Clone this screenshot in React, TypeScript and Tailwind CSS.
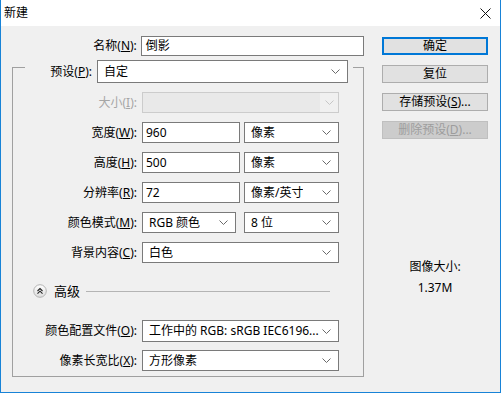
import React from 'react';

const Chevron: React.FC<{ disabled?: boolean }> = ({ disabled }) => (
  <svg width="9" height="5" viewBox="0 0 9 5" className="shrink-0">
    <polyline points="0.5,0.5 4.5,4.5 8.5,0.5" fill="none" stroke={disabled ? '#c6c6c6' : '#6a6a6a'} strokeWidth="1" />
  </svg>
);

const Label: React.FC<{ text: string; k: string; disabled?: boolean }> = ({ text, k, disabled }) => (
  <div className={`w-[124px] mr-[5px] text-right whitespace-nowrap ${disabled ? 'text-[#a6a6a6]' : 'text-black'}`}>
    {text}(<span className="underline">{k}</span>):
  </div>
);

const Select: React.FC<{ value: string; w: string; h?: string }> = ({ value, w, h = 'h-[21px]' }) => (
  <div className={`${w} ${h} flex items-center justify-between border border-[#7a7a7a] bg-white pl-[6px] pr-[7px]`}>
    <span className="whitespace-nowrap overflow-hidden">{value}</span>
    <Chevron />
  </div>
);

const Input: React.FC<{ value: string; w: string }> = ({ value, w }) => (
  <div className={`${w} h-[21px] flex items-center border border-[#7a7a7a] bg-white pl-[3px]`}>{value}</div>
);

const Row: React.FC<{ children: React.ReactNode; className?: string }> = ({ children, className = '' }) => (
  <div className={`flex items-center ${className}`}>{children}</div>
);

const Button: React.FC<{ children: React.ReactNode; focused?: boolean; disabled?: boolean }> = ({ children, focused, disabled }) => (
  <div
    className={`h-[18px] flex items-center justify-center whitespace-nowrap ${
      focused
        ? 'border-2 border-[#0078d7] bg-[#e1e1e1]'
        : disabled
        ? 'border border-[#bfbfbf] bg-[#cccccc] text-[#9d9d9d]'
        : 'border border-[#adadad] bg-[#e1e1e1]'
    }`}
  >
    {children}
  </div>
);

export default function App() {
  return (
    <div className="w-[501px] h-[393px] flex flex-col bg-white border-x border-b border-[#1883d7] text-[12px] leading-[16px] text-black font-['Noto_Sans','Noto_Sans_CJK_SC',sans-serif]">
      {/* title bar */}
      <div className="h-[26px] shrink-0 flex items-center justify-between pl-[3px] pr-[9px] bg-white">
        <span>新建</span>
        <svg width="11" height="11" viewBox="0 0 11 11">
          <path d="M0.5 0.5 L10.5 10.5 M10.5 0.5 L0.5 10.5" stroke="#111" strokeWidth="1" />
        </svg>
      </div>

      {/* body */}
      <div className="flex-1 flex bg-[#f0f0f0]">
        {/* left */}
        <div className="w-[363px] flex flex-col">
          <Row className="mt-[10px]">
            <div className="w-[137px] mr-[4px] text-right">
              名称(<span className="underline">N</span>):
            </div>
            <div className="w-[225px] h-[20px] flex items-center border border-[#7a7a7a] bg-white pl-[4px]">倒影</div>
          </Row>

          {/* group box */}
          <div className="ml-[11px] mt-[11px] w-[352px] border border-[#a0a0a0] flex flex-col pb-[5px]">
            <div className="-mt-[8px] ml-[12px] w-[328px] flex items-center bg-[#f0f0f0]">
              <div className="w-[72px] pr-[5px] text-right whitespace-nowrap">
                预设(<span className="underline">P</span>):
              </div>
              <Select value="自定" w="w-[251px]" h="h-[23px]" />
            </div>

            <Row className="mt-[9px]">
              <Label text="大小" k="I" disabled />
              <div className="w-[197px] h-[21px] flex border border-[#cccccc] bg-[#f0f0f0]">
                <div className="flex-1 bg-[#e9e9e9]" />
                <div className="w-[18px] flex items-center justify-center">
                  <Chevron disabled />
                </div>
              </div>
            </Row>

            <Row className="mt-[9px]">
              <Label text="宽度" k="W" />
              <Input value="960" w="w-[98px]" />
              <div className="ml-[4px]">
                <Select value="像素" w="w-[95px]" />
              </div>
            </Row>

            <Row className="mt-[9px]">
              <Label text="高度" k="H" />
              <Input value="500" w="w-[98px]" />
              <div className="ml-[4px]">
                <Select value="像素" w="w-[95px]" />
              </div>
            </Row>

            <Row className="mt-[9px]">
              <Label text="分辨率" k="R" />
              <Input value="72" w="w-[98px]" />
              <div className="ml-[4px]">
                <Select value="像素/英寸" w="w-[95px]" />
              </div>
            </Row>

            <Row className="mt-[9px]">
              <Label text="颜色模式" k="M" />
              <Select value="RGB 颜色" w="w-[94px]" />
              <div className="ml-[8px]">
                <Select value="8 位" w="w-[95px]" />
              </div>
            </Row>

            <Row className="mt-[9px]">
              <Label text="背景内容" k="C" />
              <Select value="白色" w="w-[197px]" />
            </Row>

            {/* advanced */}
            <Row className="mt-[21px] h-[14px] ml-[20px] mr-[33px]">
              <svg width="14" height="14" viewBox="0 0 14 14" className="shrink-0">
                <defs>
                  <linearGradient id="adv" x1="0" y1="0" x2="0" y2="1">
                    <stop offset="0" stopColor="#ffffff" />
                    <stop offset="1" stopColor="#dcdcdc" />
                  </linearGradient>
                </defs>
                <circle cx="7" cy="7" r="6.3" fill="url(#adv)" stroke="#b4b4b4" strokeWidth="1" />
                <polyline points="4.5,7 7,4.6 9.5,7" fill="none" stroke="#222" strokeWidth="1.1" />
                <polyline points="4.5,9.6 7,7.2 9.5,9.6" fill="none" stroke="#222" strokeWidth="1.1" />
              </svg>
              <span className="ml-[7px] text-[13px]">高级</span>
              <div className="ml-[6px] flex-1 h-px bg-[#b4b4b4]" />
            </Row>

            <Row className="mt-[22px]">
              <Label text="颜色配置文件" k="O" />
              <Select value="工作中的 RGB: sRGB IEC6196..." w="w-[197px]" h="h-[22px]" />
            </Row>

            <Row className="mt-[8px]">
              <Label text="像素长宽比" k="X" />
              <Select value="方形像素" w="w-[197px]" />
            </Row>
          </div>
        </div>

        {/* right */}
        <div className="ml-[18px] w-[106px] flex flex-col pt-[11px]">
          <div className="flex flex-col gap-[10px]">
            <Button focused>确定</Button>
            <Button>复位</Button>
            <Button>
              存储预设(<span className="underline">S</span>)...
            </Button>
            <Button disabled>
              删除预设(<span className="underline">D</span>)...
            </Button>
          </div>
          <div className="mt-[120px] flex flex-col items-center">
            <div>图像大小:</div>
            <div className="mt-[5px]">1.37M</div>
          </div>
        </div>
      </div>
    </div>
  );
}
